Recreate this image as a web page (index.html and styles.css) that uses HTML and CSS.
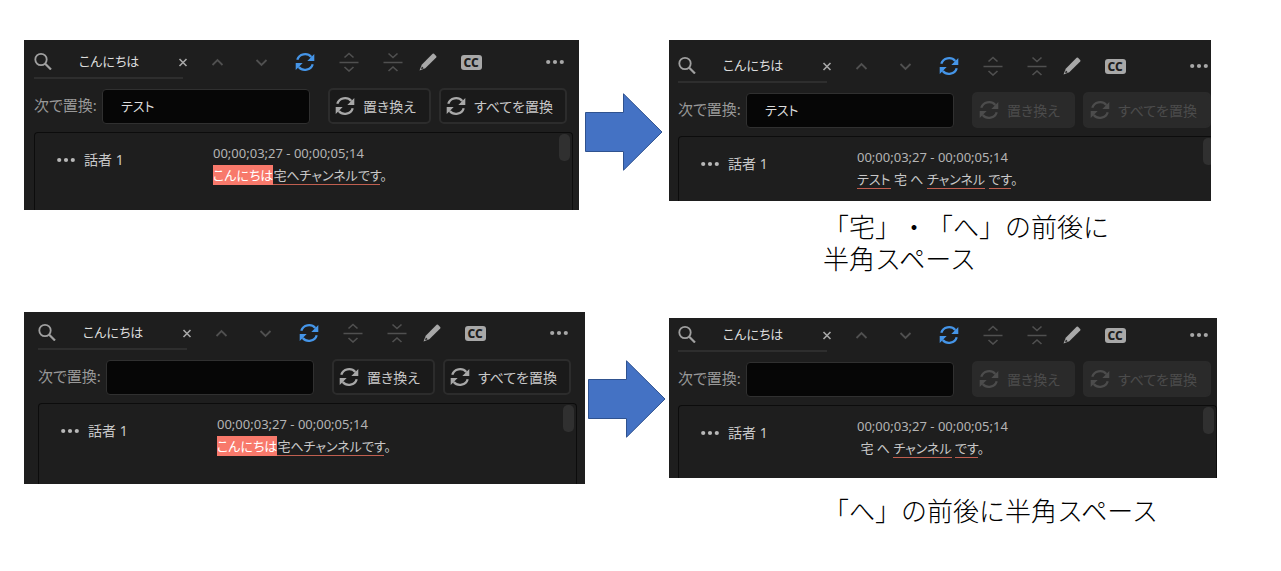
FILE: index.html
```html
<!DOCTYPE html>
<html lang="ja">
<head>
<meta charset="utf-8">
<title>置換の比較</title>
<link rel="stylesheet" href="styles.css">
</head>
<body>
<svg class="sprite" aria-hidden="true">
  <symbol id="i-search" viewBox="0 0 18 18"><circle cx="7" cy="7.500" r="5.700" fill="none" stroke="currentColor" stroke-width="1.800"/><path d="M11.200 11.700 17 17.500" stroke="currentColor" stroke-width="2.200"/></symbol>
  <symbol id="i-x" viewBox="0 0 18 18"><path d="M5.500 6l7 7m0-7l-7 7" stroke="currentColor" stroke-width="1.600"/></symbol>
  <symbol id="i-up" viewBox="0 0 18 18"><path d="M4.500 12l5-5 5 5" fill="none" stroke="currentColor" stroke-width="1.800"/></symbol>
  <symbol id="i-down" viewBox="0 0 18 18"><path d="M4.500 7l5 5 5-5" fill="none" stroke="currentColor" stroke-width="1.800"/></symbol>
  <symbol id="i-sync" viewBox="0 0 20 20"><path d="M2.300 7.800A8 7.600 0 0 1 16.300 5M17.700 12.200A8 7.600 0 0 1 3.700 15" fill="none" stroke="currentColor" stroke-width="2.300"/><path d="M19.300 2v7h-7zM.7 18v-7h7z" fill="currentColor"/></symbol>
  <symbol id="i-expand" viewBox="0 0 20 20"><path d="M.5 10.500h19M5.500 5.500L10 1.500l4.500 4M5.500 15L10 19l4.500-4" fill="none" stroke="currentColor" stroke-width="1.600"/></symbol>
  <symbol id="i-collapse" viewBox="0 0 20 20"><path d="M.5 10.500h19M5.500 1.500L10 5.500l4.500-4M5.500 19L10 15l4.500 4" fill="none" stroke="currentColor" stroke-width="1.600"/></symbol>
  <symbol id="i-pen" viewBox="0 0 18 18"><path d="M13.600.8q.7-.6 1.400 0L17.200 3q.6.7 0 1.400L6.300 15.300.5 17.600l2.200-5.900z" fill="currentColor"/><path d="M2.900 13.400l1.800 1.800-2.600 1z" fill="#1e1e1e"/></symbol>
  <symbol id="i-more" viewBox="0 0 18 18"><circle cx="2.200" cy="9" r="2.100"/><circle cx="9" cy="9" r="2.100"/><circle cx="15.800" cy="9" r="2.100"/></symbol>
  <symbol id="i-arrow" viewBox="0 0 78 78"><path d="M.5 19.500h38V.8L77 39 38.500 77.200V58.500H.5z" fill="#4472c4" stroke="#2f528f"/></symbol>
</svg>
<main class="page">
  <section class="comparison comparison-first">
    <div class="panel panel-a">
      <div class="content">
        <div class="toolbar">
          <label class="search"><svg class="icon"><use href="#i-search"/></svg><input class="search-input" type="text" value="こんにちは" aria-label="検索"></label>
          <button class="tool clear" aria-label="クリア"><svg class="icon"><use href="#i-x"/></svg></button>
          <button class="tool dim" aria-label="前へ"><svg class="icon"><use href="#i-up"/></svg></button>
          <button class="tool dim" aria-label="次へ"><svg class="icon"><use href="#i-down"/></svg></button>
          <button class="tool active" aria-label="置換"><svg class="icon icon-large"><use href="#i-sync"/></svg></button>
          <button class="tool dim" aria-label="分割"><svg class="icon icon-large"><use href="#i-expand"/></svg></button>
          <button class="tool dim" aria-label="結合"><svg class="icon icon-large"><use href="#i-collapse"/></svg></button>
          <button class="tool pen" aria-label="編集"><svg class="icon"><use href="#i-pen"/></svg></button>
          <button class="tool captions" aria-label="キャプション"><span class="cc">CC</span></button>
          <button class="tool more" aria-label="その他"><svg class="icon"><use href="#i-more"/></svg></button>
        </div>
        <div class="replace">
          <label class="replace-label" for="r1">次で置換:</label>
          <input class="replace-input" id="r1" type="text" value="テスト">
          <button class="action"><svg class="icon icon-large"><use href="#i-sync"/></svg>置き換え</button>
          <button class="action action-all"><svg class="icon icon-large"><use href="#i-sync"/></svg>すべてを置換</button>
        </div>
        <div class="transcript">
          <div class="speaker"><svg class="icon"><use href="#i-more"/></svg>話者 1</div>
          <div class="speech">
            <div class="time">00;00;03;27 - 00;00;05;14</div>
            <div class="words"><mark class="hit">こんにちは</mark><span class="word">宅へチャンネルです</span>。</div>
          </div>
          <div class="thumb"></div>
        </div>
      </div>
    </div>
    <svg class="arrow" aria-hidden="true"><use href="#i-arrow"/></svg>
    <div class="result">
      <div class="panel panel-b">
        <div class="content">
          <div class="toolbar">
            <label class="search"><svg class="icon"><use href="#i-search"/></svg><input class="search-input" type="text" value="こんにちは" aria-label="検索"></label>
            <button class="tool clear" aria-label="クリア"><svg class="icon"><use href="#i-x"/></svg></button>
            <button class="tool dim" aria-label="前へ"><svg class="icon"><use href="#i-up"/></svg></button>
            <button class="tool dim" aria-label="次へ"><svg class="icon"><use href="#i-down"/></svg></button>
            <button class="tool active" aria-label="置換"><svg class="icon icon-large"><use href="#i-sync"/></svg></button>
            <button class="tool dim" aria-label="分割"><svg class="icon icon-large"><use href="#i-expand"/></svg></button>
            <button class="tool dim" aria-label="結合"><svg class="icon icon-large"><use href="#i-collapse"/></svg></button>
            <button class="tool pen" aria-label="編集"><svg class="icon"><use href="#i-pen"/></svg></button>
            <button class="tool captions" aria-label="キャプション"><span class="cc">CC</span></button>
            <button class="tool more" aria-label="その他"><svg class="icon"><use href="#i-more"/></svg></button>
          </div>
          <div class="replace">
            <label class="replace-label" for="r2">次で置換:</label>
            <input class="replace-input" id="r2" type="text" value="テスト">
            <button class="action" disabled><svg class="icon icon-large"><use href="#i-sync"/></svg>置き換え</button>
            <button class="action action-all" disabled><svg class="icon icon-large"><use href="#i-sync"/></svg>すべてを置換</button>
          </div>
          <div class="transcript">
            <div class="speaker"><svg class="icon"><use href="#i-more"/></svg>話者 1</div>
            <div class="speech">
              <div class="time">00;00;03;27 - 00;00;05;14</div>
              <div class="words"><span class="word">テスト</span> 宅 へ <span class="word">チャンネル</span> <span class="word">です</span>。</div>
            </div>
            <div class="thumb"></div>
          </div>
        </div>
      </div>
      <p class="caption">「宅」・「へ」の前後に<br>半角スペース</p>
    </div>
  </section>
  <section class="comparison comparison-second">
    <div class="panel panel-c">
      <div class="content">
        <div class="toolbar">
          <label class="search"><svg class="icon"><use href="#i-search"/></svg><input class="search-input" type="text" value="こんにちは" aria-label="検索"></label>
          <button class="tool clear" aria-label="クリア"><svg class="icon"><use href="#i-x"/></svg></button>
          <button class="tool dim" aria-label="前へ"><svg class="icon"><use href="#i-up"/></svg></button>
          <button class="tool dim" aria-label="次へ"><svg class="icon"><use href="#i-down"/></svg></button>
          <button class="tool active" aria-label="置換"><svg class="icon icon-large"><use href="#i-sync"/></svg></button>
          <button class="tool dim" aria-label="分割"><svg class="icon icon-large"><use href="#i-expand"/></svg></button>
          <button class="tool dim" aria-label="結合"><svg class="icon icon-large"><use href="#i-collapse"/></svg></button>
          <button class="tool pen" aria-label="編集"><svg class="icon"><use href="#i-pen"/></svg></button>
          <button class="tool captions" aria-label="キャプション"><span class="cc">CC</span></button>
          <button class="tool more" aria-label="その他"><svg class="icon"><use href="#i-more"/></svg></button>
        </div>
        <div class="replace">
          <label class="replace-label" for="r3">次で置換:</label>
          <input class="replace-input" id="r3" type="text">
          <button class="action"><svg class="icon icon-large"><use href="#i-sync"/></svg>置き換え</button>
          <button class="action action-all"><svg class="icon icon-large"><use href="#i-sync"/></svg>すべてを置換</button>
        </div>
        <div class="transcript">
          <div class="speaker"><svg class="icon"><use href="#i-more"/></svg>話者 1</div>
          <div class="speech">
            <div class="time">00;00;03;27 - 00;00;05;14</div>
            <div class="words"><mark class="hit">こんにちは</mark><span class="word">宅へチャンネルです</span>。</div>
          </div>
          <div class="thumb"></div>
        </div>
      </div>
    </div>
    <svg class="arrow" aria-hidden="true"><use href="#i-arrow"/></svg>
    <div class="result">
      <div class="panel panel-d">
        <div class="content">
          <div class="toolbar">
            <label class="search"><svg class="icon"><use href="#i-search"/></svg><input class="search-input" type="text" value="こんにちは" aria-label="検索"></label>
            <button class="tool clear" aria-label="クリア"><svg class="icon"><use href="#i-x"/></svg></button>
            <button class="tool dim" aria-label="前へ"><svg class="icon"><use href="#i-up"/></svg></button>
            <button class="tool dim" aria-label="次へ"><svg class="icon"><use href="#i-down"/></svg></button>
            <button class="tool active" aria-label="置換"><svg class="icon icon-large"><use href="#i-sync"/></svg></button>
            <button class="tool dim" aria-label="分割"><svg class="icon icon-large"><use href="#i-expand"/></svg></button>
            <button class="tool dim" aria-label="結合"><svg class="icon icon-large"><use href="#i-collapse"/></svg></button>
            <button class="tool pen" aria-label="編集"><svg class="icon"><use href="#i-pen"/></svg></button>
            <button class="tool captions" aria-label="キャプション"><span class="cc">CC</span></button>
            <button class="tool more" aria-label="その他"><svg class="icon"><use href="#i-more"/></svg></button>
          </div>
          <div class="replace">
            <label class="replace-label" for="r4">次で置換:</label>
            <input class="replace-input" id="r4" type="text">
            <button class="action" disabled><svg class="icon icon-large"><use href="#i-sync"/></svg>置き換え</button>
            <button class="action action-all" disabled><svg class="icon icon-large"><use href="#i-sync"/></svg>すべてを置換</button>
          </div>
          <div class="transcript">
            <div class="speaker"><svg class="icon"><use href="#i-more"/></svg>話者 1</div>
            <div class="speech">
              <div class="time">00;00;03;27 - 00;00;05;14</div>
              <div class="words">&nbsp;宅 へ <span class="word">チャンネル</span> <span class="word">です</span>。</div>
            </div>
            <div class="thumb"></div>
          </div>
        </div>
      </div>
      <p class="caption">「へ」の前後に半角スペース</p>
    </div>
  </section>
</main>
</body>
</html>
```
FILE: styles.css
```css
* { box-sizing: border-box; }
body { margin: 0; background: #fff; font-family: "Noto Sans", "Noto Sans CJK JP", sans-serif; }
.sprite { position: absolute; width: 0; height: 0; }
.page { display: flex; flex-direction: column; gap: 38px; padding: 40px 64px 40px 24px; }
.comparison { display: grid; align-items: start; justify-items: stretch; }
.comparison-first { grid-template-columns: minmax(0, 555fr) 90px minmax(0, 542fr); padding-right: 6px; }
.comparison-second { grid-template-columns: minmax(0, 561fr) 84px minmax(0, 548fr); }
.arrow { width: 78px; height: 78px; justify-self: center; margin-top: 53px; }
.comparison-second .arrow { margin-top: 48px; }
.comparison-second .result { padding-top: 6px; }

.panel { overflow: hidden; background: #1e1e1e; color: #c8c8c8; font-size: 14px; font-feature-settings: "palt"; }
.panel-a { padding: 5px 6px 0 10px; }
.panel-b { padding: 9px 0 0 9px; }
.panel-c { padding: 4px 8px 0 14px; }
.panel-d { padding: 0 0 0 9px; }
.content { min-width: 539px; }

.icon { width: 18px; height: 18px; flex: none; fill: currentColor; }
.icon-large { width: 20px; height: 20px; }
input, button { font: inherit; font-feature-settings: inherit; }

.toolbar { display: flex; height: 34px; }
.search { display: flex; align-items: center; width: 149px; gap: 27px; border-bottom: 2px solid #2e2e2e; color: #a0a0a0; }
.search-input { width: 80px; padding: 0 0 2px; border: 0; background: none; color: #dcdcdc; font-size: 13px; outline: 0; }
.tool { display: flex; align-items: center; justify-content: center; width: 44px; padding: 0; border: 0; background: none; color: #a8a8a8; }
.clear { width: 24px; margin-left: -12px; }
.dim { color: #505050; }
.active { color: #4595e8; }
.pen { width: 26px; }
.captions { width: 60px; }
.more { width: 36px; margin-left: auto; }
.cc { width: 21px; border-radius: 3px; background: #a8a8a8; color: #1e1e1e; font-size: 12px; font-weight: 800; line-height: 15px; }

.replace { display: flex; align-items: center; margin-top: 9px; }
.replace-label { width: 68px; padding-bottom: 3px; color: #989898; font-size: 15px; white-space: nowrap; }
.replace-input { flex: 1; min-width: 0; height: 35px; margin-right: 18px; padding: 0 18px 2px; border: 1px solid #303030; border-radius: 4px; background: #060606; color: #dcdcdc; font-size: 13px; outline: 0; }
.action { display: flex; align-items: center; justify-content: flex-start; gap: 8px; width: 103px; height: 36px; margin-right: 8px; padding: 0 0 0 5px; border: 2px solid #2c2c2c; border-radius: 5px; background: #1a1a1a; color: #c8c8c8; white-space: nowrap; }
.action-all { width: 128px; margin-right: 6px; }
.action .icon { color: #a8a8a8; }
.action:disabled, .action:disabled .icon { color: #4c4c4c; }
.action:disabled { background: #2a2a2a; border-color: #2a2a2a; }

.transcript { display: flex; margin-top: 8px; padding: 9px 2px 0 22px; border: 1px solid #0c0c0c; border-bottom: 0; border-radius: 4px 4px 0 0; line-height: 22px; }
.panel-a .transcript { padding-bottom: 24px; }
.panel-b .transcript { padding-bottom: 11px; }
.panel-c .transcript { padding-bottom: 27px; }
.panel-d .transcript { padding-bottom: 19px; }
.speaker { display: flex; align-items: center; gap: 9px; width: 156px; height: 36px; }
.speaker .icon { color: #b8b8b8; }
.speech { flex: 1; white-space: nowrap; }
.time { font-size: 13px; color: #b4b4b4; }
.words { font-size: 13px; }
.word { border-bottom: 1px solid #c05f50; }
.hit { padding: 1px 0; background: #f8796b; color: #fff; }
.thumb { width: 11px; height: 27px; margin-top: -8px; border-radius: 5px; background: #303030; }

.caption { margin: 9px 0 0 154px; color: #000; font-family: "Noto Sans CJK JP", sans-serif; font-size: 26px; font-weight: 300; line-height: 32px; text-spacing-trim: space-all; white-space: nowrap; }
.comparison-second .caption { margin-top: 16px; }
```
